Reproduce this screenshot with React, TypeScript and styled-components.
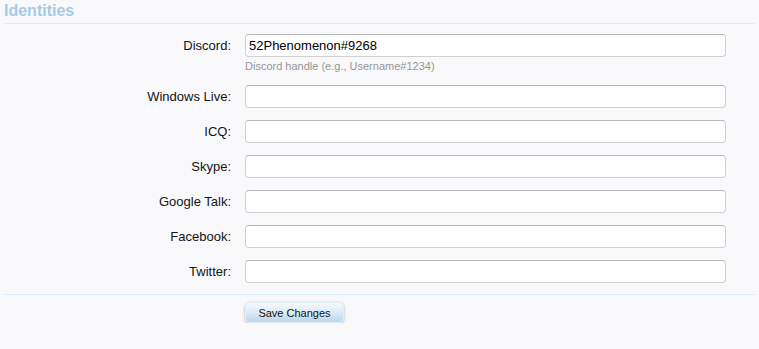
import styled, { createGlobalStyle } from "styled-components";

const GlobalStyle = createGlobalStyle`
  html, body {
    margin: 0;
    padding: 0;
    background-color: #f9f9fb;
    font-family: "Liberation Sans", Arial, sans-serif;
  }
`;

const Page = styled.div`
  padding: 0 4px;
`;

const Heading = styled.h3`
  margin: 0;
  padding: 3px 0 4px 0;
  font-size: 16px;
  line-height: 16px;
  font-weight: bold;
  color: #a5cae4;
  border-bottom: 1px solid #d7edfc;
`;

const Form = styled.form`
  display: flex;
  flex-direction: column;
  gap: 12px;
  padding: 10px 0 11px 0;
  border-bottom: 1px solid #d7edfc;
`;

const Row = styled.div`
  display: grid;
  grid-template-columns: 227px 481px;
  column-gap: 14px;
  align-items: start;
`;

const Label = styled.label`
  text-align: right;
  font-size: 13px;
  line-height: 23px;
  color: #141414;
`;

const Field = styled.div`
  display: flex;
  flex-direction: column;
`;

const Input = styled.input`
  box-sizing: border-box;
  width: 100%;
  height: 23px;
  padding: 2px 3px 3px;
  font-family: inherit;
  font-size: 13px;
  color: #000;
  background: #fff;
  border: 1px solid #d0d0d0;
  border-top-color: #b8b8b8;
  border-radius: 4px;
  outline: none;
`;

const Hint = styled.div`
  margin-top: 3px;
  font-size: 11px;
  line-height: 13px;
  color: #969696;
`;

const Actions = styled.div`
  display: grid;
  grid-template-columns: 227px auto;
  column-gap: 14px;
  padding-top: 7px;
`;

const SaveButton = styled.button`
  grid-column: 2;
  justify-self: start;
  width: 99px;
  height: 21px;
  padding: 0;
  font-family: inherit;
  font-size: 11px;
  color: #141414;
  background: linear-gradient(to bottom, #f4f9fd 0%, #dcebf6 50%, #b9d6ec 100%);
  border: 1px solid #e2eef7;
  border-radius: 5px;
  box-shadow: 0 1px 3px rgba(0, 0, 0, 0.3);
  cursor: pointer;
`;

const fields = [
  { label: "Windows Live:", value: "" },
  { label: "ICQ:", value: "" },
  { label: "Skype:", value: "" },
  { label: "Google Talk:", value: "" },
  { label: "Facebook:", value: "" },
  { label: "Twitter:", value: "" },
];

const App = () => {
  return (
    <Page>
      <GlobalStyle />
      <Heading>Identities</Heading>
      <Form onSubmit={(e) => e.preventDefault()}>
        <Row>
          <Label>Discord:</Label>
          <Field>
            <Input type="text" defaultValue="52Phenomenon#9268" />
            <Hint>Discord handle (e.g., Username#1234)</Hint>
          </Field>
        </Row>
        {fields.map((f) => (
          <Row key={f.label}>
            <Label>{f.label}</Label>
            <Field>
              <Input type="text" defaultValue={f.value} />
            </Field>
          </Row>
        ))}
      </Form>
      <Actions>
        <SaveButton type="button">Save Changes</SaveButton>
      </Actions>
    </Page>
  );
};

export default App;
